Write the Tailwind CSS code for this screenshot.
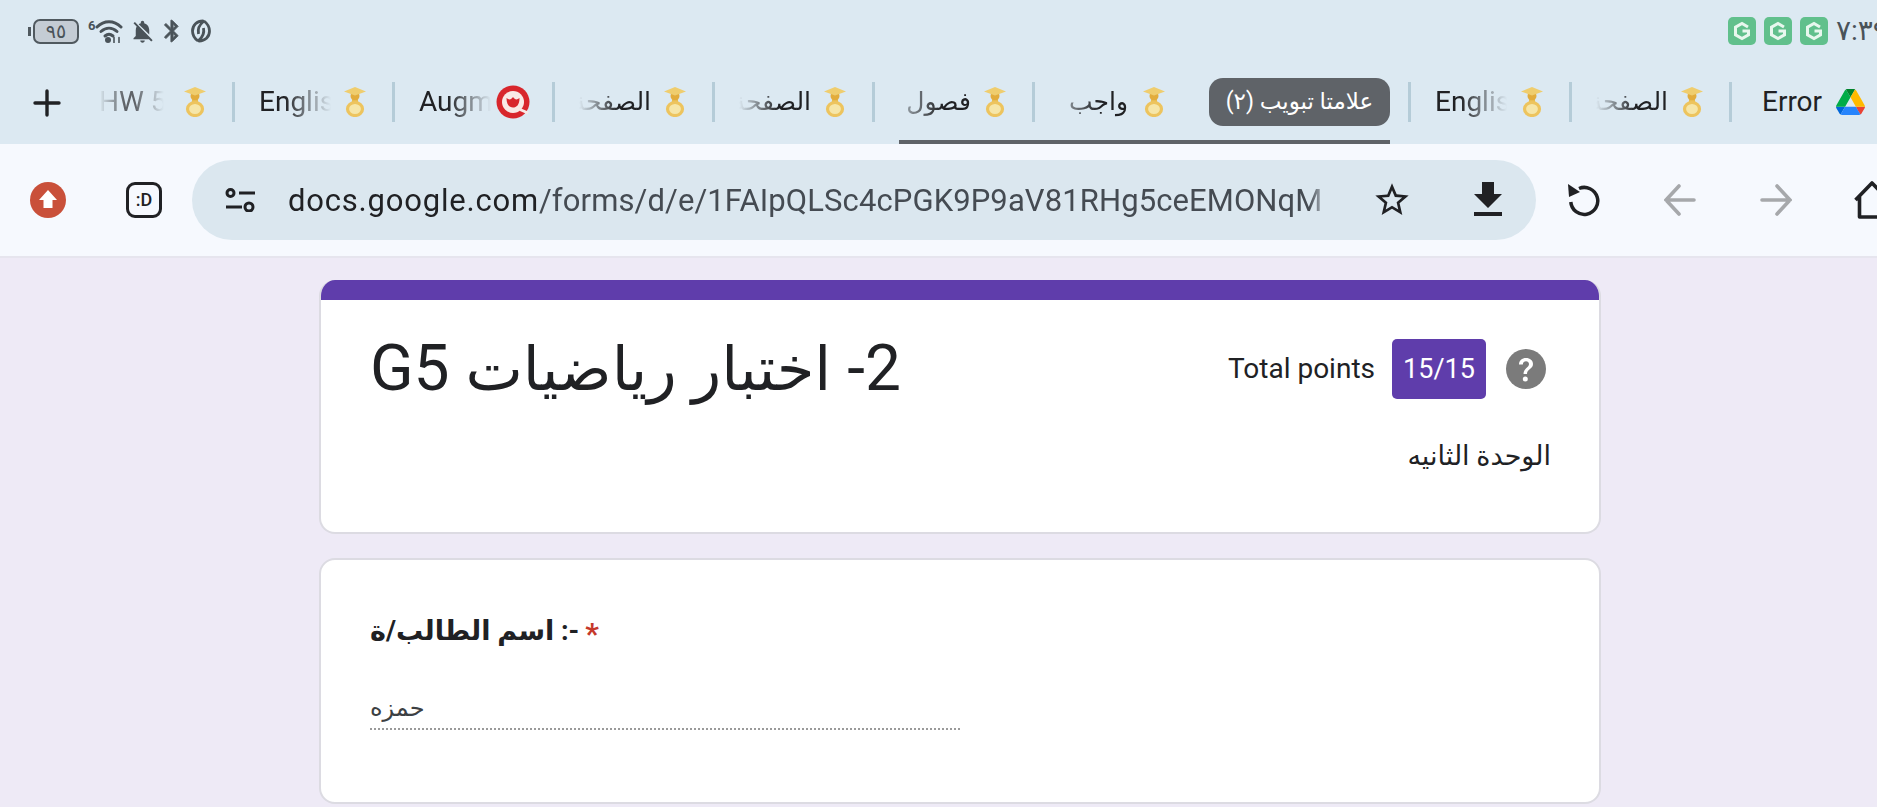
<!DOCTYPE html>
<html lang="ar">
<head>
<meta charset="UTF-8" />
<title>G5</title>
<script src="https://cdn.jsdelivr.net/npm/@tailwindcss/browser@4"></script>
</head>
<body class="w-[1877px] h-[807px] overflow-hidden bg-[#eeeaf6] font-['Roboto','DejaVu_Sans',sans-serif] text-[#202124]">
<svg class="absolute w-0 h-0">
  <symbol id="cap" viewBox="0 0 22 30">
    <circle cx="11" cy="9" r="4.500" fill="#e2ac3c"/>
    <path d="M11 0 22 4.500 11 8.500 0 4.500z" fill="#efcd6e"/>
    <path d="M8 13h6v3H8z" fill="#e8bd52"/>
    <ellipse cx="11" cy="22" rx="7.500" ry="6.500" fill="#f6e6a8" stroke="#edc45e" stroke-width="3.200"/>
  </symbol>
  <symbol id="gext" viewBox="0 0 28 28">
    <rect width="28" height="28" rx="5" fill="#61c08c"/>
    <path d="M20 10 14 6.500 7.500 10.200V17.800L14 21.500 20.500 17.800V14H14.500" fill="none" stroke="#e8f7ee" stroke-width="3"/>
  </symbol>
</svg>

<!-- status bar -->
<div class="h-[62px] bg-[#dce9f2] flex items-center pl-[28px] text-[#4a5359]">
  <div class="flex items-center flex-none">
    <div class="w-[3px] h-[9px] bg-[#50595f] mr-[2px]"></div>
    <div class="w-[46px] h-[25px] rounded-[7px] border-[2.500px] border-[#50595f] bg-[#c4ccd4] flex items-center justify-center text-[19px] leading-none">٩٥</div>
  </div>
  <div class="text-[13px] font-bold leading-none ml-[9px] mb-[12px]">6</div>
  <svg class="w-[28px] h-[24px] flex-none" viewBox="0 0 28 24" fill="none" stroke="#4a5359" stroke-width="3" stroke-linecap="round">
    <path d="M2 8C9 1 19 1 26 8"/><path d="M6 12.500c5-4.500 11-4.500 16 0"/><path d="M10 17c3-2.500 5-2.500 8 0"/>
    <circle cx="13" cy="21" r="3" fill="#4a5359" stroke="none"/>
    <path d="M19 18.500v5M24 18.500v5" stroke-width="1.600"/>
  </svg>
  <svg class="w-[27px] h-[27px] ml-[6px] flex-none" viewBox="0 0 24 24" fill="#4a5359"><path d="M20 18.690 7.840 6.140 5.270 3.490 4 4.760l2.800 2.800v.01c-.52.99-.8 2.160-.8 3.420v5l-2 2v1h13.730l2 2L21 19.720l-1-1.030zM12 22c1.110 0 2-.89 2-2h-4c0 1.110.89 2 2 2zm6-7.320V11c0-3.080-1.640-5.640-4.500-6.320V4c0-.83-.67-1.500-1.500-1.500s-1.500.67-1.500 1.500v.68c-.15.03-.29.08-.42.12-.1.03-.2.07-.3.11h-.01c-.2.08-.4.17-.59.27-.2.1-.4.2-.59.32L18 14.680z"/></svg>
  <svg class="w-[26px] h-[26px] ml-[3px] flex-none" viewBox="0 0 24 24" fill="#4a5359" stroke="#4a5359" stroke-width=".8"><path d="M17.710 7.710 12 2h-1v7.590L6.410 5 5 6.410 10.590 12 5 17.590 6.410 19 11 14.410V22h1l5.710-5.710-4.300-4.290 4.300-4.290zM13 5.830l1.880 1.880L13 9.590V5.830zm1.880 10.460L13 18.170v-3.760l1.880 1.880z"/></svg>
  <svg class="w-[22px] h-[26px] ml-[5px] flex-none" viewBox="0 0 22 26" fill="none" stroke="#4a5359" stroke-width="2.800" stroke-linejoin="round">
    <path d="M8 23C4 20 2.500 17 2.500 13 2.500 7 7 3 13 3L13.500 3.500C9 7 7.500 11 8.500 16"/>
    <path d="M14 3C18 6 19.500 9 19.500 13 19.500 19 15 23 9 23L8.500 22.500C13 19 14.500 15 13.500 10"/>
  </svg>
  <div class="ml-auto w-[149px] flex-none flex items-center gap-[8px] overflow-hidden">
    <svg class="w-[28px] h-[28px] flex-none"><use href="#gext"/></svg>
    <svg class="w-[28px] h-[28px] flex-none"><use href="#gext"/></svg>
    <svg class="w-[28px] h-[28px] flex-none"><use href="#gext"/></svg>
    <span class="text-[28px] leading-none whitespace-nowrap flex-none" dir="ltr">٧:٣٩</span>
  </div>
</div>

<!-- tab strip -->
<div class="relative h-[82px] bg-[#dce9f2] flex items-center overflow-hidden">
  <div class="w-[75px] flex-none flex justify-center pl-[19px]">
    <svg class="w-[28px] h-[28px]" viewBox="0 0 28 28" stroke="#202124" stroke-width="3.400" stroke-linecap="round"><path d="M14 2v24M2 14h24"/></svg>
  </div>

  <div class="w-[160px] flex-none flex items-center pl-[24px] pr-[26px] border-r-[3px] border-[#b5ccd8] h-[40px] mt-[-2px]">
    <span class="w-[72px] overflow-hidden whitespace-nowrap text-[28px] text-[#5f6368] [mask-image:linear-gradient(to_right,transparent,#000_35%,#000_50%,transparent_90%)]">HW 5</span>
    <svg class="w-[22px] h-[30px] ml-auto flex-none"><use href="#cap"/></svg>
  </div>
  <div class="w-[160px] flex-none flex items-center pl-[24px] pr-[26px] border-r-[3px] border-[#b5ccd8] h-[40px] mt-[-2px]">
    <span class="w-[72px] overflow-hidden whitespace-nowrap text-[28px] [mask-image:linear-gradient(to_right,#000_35%,transparent)]">English</span>
    <svg class="w-[22px] h-[30px] ml-auto flex-none"><use href="#cap"/></svg>
  </div>
  <div class="w-[160px] flex-none flex items-center pl-[24px] pr-[22px] border-r-[3px] border-[#b5ccd8] h-[40px] mt-[-2px]">
    <span class="w-[72px] overflow-hidden whitespace-nowrap text-[28px] [mask-image:linear-gradient(to_right,#000_40%,transparent)]">Augment</span>
    <svg class="w-[34px] h-[34px] ml-auto flex-none" viewBox="0 0 34 34">
      <circle cx="17" cy="17" r="16.500" fill="#d8262c"/>
      <circle cx="17" cy="17" r="11" fill="#f9e9e6"/>
      <path d="M10.500 13C13 15 15 15 17 12 19 15 21 15 23.500 13 23.500 20 20.500 22.500 17 22.500 13.500 22.500 10.500 20 10.500 13z" fill="#d8262c"/>
      <path d="M24 24.500l8 3.500" stroke="#f9e9e6" stroke-width="3"/>
    </svg>
  </div>
  <div class="w-[160px] flex-none flex items-center pl-[24px] pr-[26px] border-r-[3px] border-[#b5ccd8] h-[40px] mt-[-2px]">
    <span dir="rtl" class="w-[72px] overflow-hidden whitespace-nowrap text-[25px] [mask-image:linear-gradient(to_left,#000_45%,transparent)]">الصفحة الرئيسية</span>
    <svg class="w-[22px] h-[30px] ml-auto flex-none"><use href="#cap"/></svg>
  </div>
  <div class="w-[160px] flex-none flex items-center pl-[24px] pr-[26px] border-r-[3px] border-[#b5ccd8] h-[40px] mt-[-2px]">
    <span dir="rtl" class="w-[72px] overflow-hidden whitespace-nowrap text-[25px] [mask-image:linear-gradient(to_left,#000_45%,transparent)]">الصفحة الرئيسية</span>
    <svg class="w-[22px] h-[30px] ml-auto flex-none"><use href="#cap"/></svg>
  </div>
  <div class="w-[160px] flex-none flex items-center pl-[24px] pr-[26px] border-r-[3px] border-[#b5ccd8] h-[40px] mt-[-2px]">
    <span dir="rtl" class="w-[72px] overflow-hidden whitespace-nowrap text-[25px] [mask-image:linear-gradient(to_left,#000_40%,#0004)]">فصول</span>
    <svg class="w-[22px] h-[30px] ml-auto flex-none"><use href="#cap"/></svg>
  </div>
  <div class="w-[376px] flex-none flex items-center pl-[21px] border-r-[3px] border-[#b5ccd8] h-[40px] mt-[-2px]">
    <span dir="rtl" class="w-[72px] overflow-hidden whitespace-nowrap text-[25px] [mask-image:linear-gradient(to_left,#000_40%,#0004)]">واجب</span>
    <svg class="w-[22px] h-[30px] ml-[15px] flex-none"><use href="#cap"/></svg>
  </div>
  <div class="w-[161px] flex-none flex items-center pl-[24px] pr-[26px] border-r-[3px] border-[#b5ccd8] h-[40px] mt-[-2px]">
    <span class="w-[72px] overflow-hidden whitespace-nowrap text-[28px] [mask-image:linear-gradient(to_right,#000_35%,transparent)]">English</span>
    <svg class="w-[22px] h-[30px] ml-auto flex-none"><use href="#cap"/></svg>
  </div>
  <div class="w-[160px] flex-none flex items-center pl-[24px] pr-[26px] border-r-[3px] border-[#b5ccd8] h-[40px] mt-[-2px]">
    <span dir="rtl" class="w-[72px] overflow-hidden whitespace-nowrap text-[25px] [mask-image:linear-gradient(to_left,#000_45%,transparent)]">الصفحة الرئيسية</span>
    <svg class="w-[22px] h-[30px] ml-auto flex-none"><use href="#cap"/></svg>
  </div>
  <div class="flex-none flex items-center pl-[30px] h-[40px] mt-[-2px]">
    <span class="w-[74px] overflow-hidden whitespace-nowrap text-[28px]">Error</span>
    <svg class="w-[29px] h-[26px] flex-none" viewBox="0 0 87.300 78">
      <path d="m6.600 66.850 3.850 6.650c.8 1.400 1.950 2.500 3.300 3.300l13.750-23.800h-27.500c0 1.550.4 3.100 1.200 4.500z" fill="#0066da"/>
      <path d="m43.650 25-13.750-23.800c-1.350.8-2.500 1.900-3.300 3.300l-25.400 44a9.060 9.060 0 0 0 -1.200 4.500h27.500z" fill="#00ac47"/>
      <path d="m73.550 76.800c1.350-.8 2.500-1.900 3.300-3.300l1.600-2.750 7.650-13.250c.8-1.400 1.200-2.950 1.200-4.500h-27.502l5.852 11.500z" fill="#ea4335"/>
      <path d="m43.650 25 13.750-23.800c-1.350-.8-2.900-1.200-4.500-1.200h-18.500c-1.600 0-3.150.45-4.500 1.200z" fill="#00832d"/>
      <path d="m59.800 53h-32.300l-13.750 23.800c1.350.8 2.900 1.200 4.500 1.200h50.800c1.600 0 3.150-.45 4.500-1.200z" fill="#2684fc"/>
      <path d="m73.400 26.500-12.700-22c-.8-1.400-1.950-2.500-3.300-3.300l-13.750 23.800 16.150 28h27.450c0-1.550-.4-3.100-1.200-4.500z" fill="#ffba00"/>
    </svg>
  </div>

  <!-- tooltip over the active tab, and its underline -->
  <div class="absolute left-[1209px] top-[16px] w-[181px] h-[48px] rounded-[14px] bg-[#5f6368] text-white text-[23px] flex items-center justify-center whitespace-nowrap" dir="rtl">علامتا تبويب (٢)</div>
  <div class="absolute left-[899px] bottom-0 w-[491px] h-[4px] bg-[#5f6368]"></div>
</div>

<!-- toolbar -->
<div class="h-[114px] bg-[#f6f9fe] border-b-2 border-[#e6e5ee] flex items-center">
  <div class="w-24 flex-none flex justify-center">
    <svg class="w-[36px] h-[36px]" viewBox="0 0 36 36"><circle cx="18" cy="18" r="18" fill="#c9503a"/><path d="M18 8 27 18H22.500V26H13.500V18H9z" fill="#fff"/></svg>
  </div>
  <div class="w-24 flex-none flex justify-center">
    <div class="w-[36px] h-[36px] rounded-[9px] border-[3.500px] border-[#202124] flex items-center justify-center text-[18px] font-medium leading-none">:D</div>
  </div>
  <div class="w-[1344px] h-[80px] flex-none rounded-full bg-[#dbe7ef] flex items-center">
    <div class="w-24 flex-none flex justify-center">
      <svg class="w-[30px] h-[24px]" viewBox="0 0 30 24" fill="none" stroke="#202124" stroke-width="3"><circle cx="5.500" cy="5" r="3.500"/><path d="M14 5h16M1 19h16"/><circle cx="24" cy="19" r="4"/></svg>
    </div>
    <div class="w-[1042px] flex-none overflow-hidden whitespace-nowrap text-[31px] pt-[2px] tracking-[0.1px] text-[#454b52] [mask-image:linear-gradient(to_right,#000_98%,transparent)]"><span class="text-[#202124] tracking-[0.8px]">docs.google.com</span>/forms/d/e/1FAIpQLSc4cPGK9P9aV81RHg5ceEMONqM</div>
    <div class="w-[14px] flex-none"></div>
    <div class="w-24 flex-none flex justify-center">
      <svg class="w-[40px] h-[40px]" viewBox="0 0 24 24" fill="#202124"><path d="M22 9.240l-7.190-.62L12 2 9.190 8.630 2 9.240l5.460 4.730L5.820 21 12 17.270 18.180 21l-1.630-7.030L22 9.240zM12 15.400l-3.760 2.270 1-4.280-3.320-2.880 4.380-.38L12 6.100l1.710 4.040 4.380.38-3.320 2.880 1 4.280L12 15.400z"/></svg>
    </div>
    <div class="w-24 flex-none flex justify-center">
      <svg class="w-[48px] h-[48px]" viewBox="0 0 24 24" fill="#202124"><path d="M19 9h-4V3H9v6H5l7 7 7-7zM5 18v2h14v-2H5z"/></svg>
    </div>
  </div>
  <div class="w-24 flex-none flex justify-center">
    <svg class="w-[32px] h-[34px]" viewBox="0 0 32 34" fill="none"><path d="M11 5.500A13.500 13.500 0 1 1 2.800 19" stroke="#202124" stroke-width="3.500"/><path d="M0 1 1 14 12 9z" fill="#202124"/></svg>
  </div>
  <div class="w-24 flex-none flex justify-center">
    <svg class="w-[32px] h-[32px]" viewBox="0 0 32 32" fill="none" stroke="#a6a8ab" stroke-width="3.600" stroke-linecap="round"><path d="M30 16H2M15 2 2 16 15 30"/></svg>
  </div>
  <div class="w-24 flex-none flex justify-center">
    <svg class="w-[32px] h-[32px]" viewBox="0 0 32 32" fill="none" stroke="#a6a8ab" stroke-width="3.600" stroke-linecap="round"><path d="M2 16H30M17 2 30 16 17 30"/></svg>
  </div>
  <div class="w-24 flex-none flex justify-center">
    <svg class="w-[36px] h-[38px]" viewBox="0 0 36 38" fill="none" stroke="#202124" stroke-width="3.600" stroke-linejoin="round"><path d="M1.500 19 18 2 34.500 19M5.500 15V36H30.500V15"/></svg>
  </div>
</div>

<!-- form -->
<div class="ml-[319px] w-[1282px] pt-[22px] flex flex-col gap-[24px]">
  <div class="h-[254px] bg-white rounded-[16px] border-2 border-t-0 border-[#dcdbe2] overflow-hidden">
    <div class="h-[20px] bg-[#5f3dab] -mx-[2px]"></div>
    <div class="flex items-center justify-between pl-[49px] pr-[53px] pt-[39px] h-[99px]">
      <div dir="rtl" class="text-[64px] leading-none">2- <span class="text-[61px]">اختبار رياضيات</span> G5</div>
      <div class="flex items-center">
        <span class="text-[28px]">Total points</span>
        <span class="ml-[17px] w-[94px] h-[60px] rounded-[5px] bg-[#5f3dab] text-white text-[27px] flex items-center justify-center">15/15</span>
        <svg class="ml-[20px] w-[40px] h-[40px]" viewBox="0 0 40 40"><circle cx="20" cy="20" r="20" fill="#7b7b7b"/><path d="M13 15.500c0-4 3-6.500 7-6.500s7 2.500 7 6c0 5-6 5-6 10h-3.500c0-6 5.500-6 5.500-10 0-1.500-1.300-2.700-3-2.700s-3 1.200-3.200 3.200z" fill="#fff"/><circle cx="19.300" cy="30" r="2.500" fill="#fff"/></svg>
      </div>
    </div>
    <div dir="rtl" class="pr-[48px] pl-[49px] mt-[41px] text-[27px] leading-[32px]">الوحدة الثانيه</div>
  </div>

  <div class="h-[246px] bg-white rounded-[16px] border-2 border-[#dcdbe2] px-[49px] pt-[54px]">
    <div class="flex items-center gap-[6px] h-[34px]">
      <span dir="rtl" class="text-[27px] font-bold leading-none">-: اسم الطالب/ة</span>
      <span class="text-[30px] font-bold text-[#c5392b] leading-none mt-[6px]">*</span>
    </div>
    <div dir="rtl" class="w-[590px] mt-[45px] pb-[5px] border-b-2 border-dotted border-[#9a9a9a] text-[24px] leading-[30px] text-left text-[#3c4043]">حمزه</div>
  </div>
</div>
</body>
</html>
